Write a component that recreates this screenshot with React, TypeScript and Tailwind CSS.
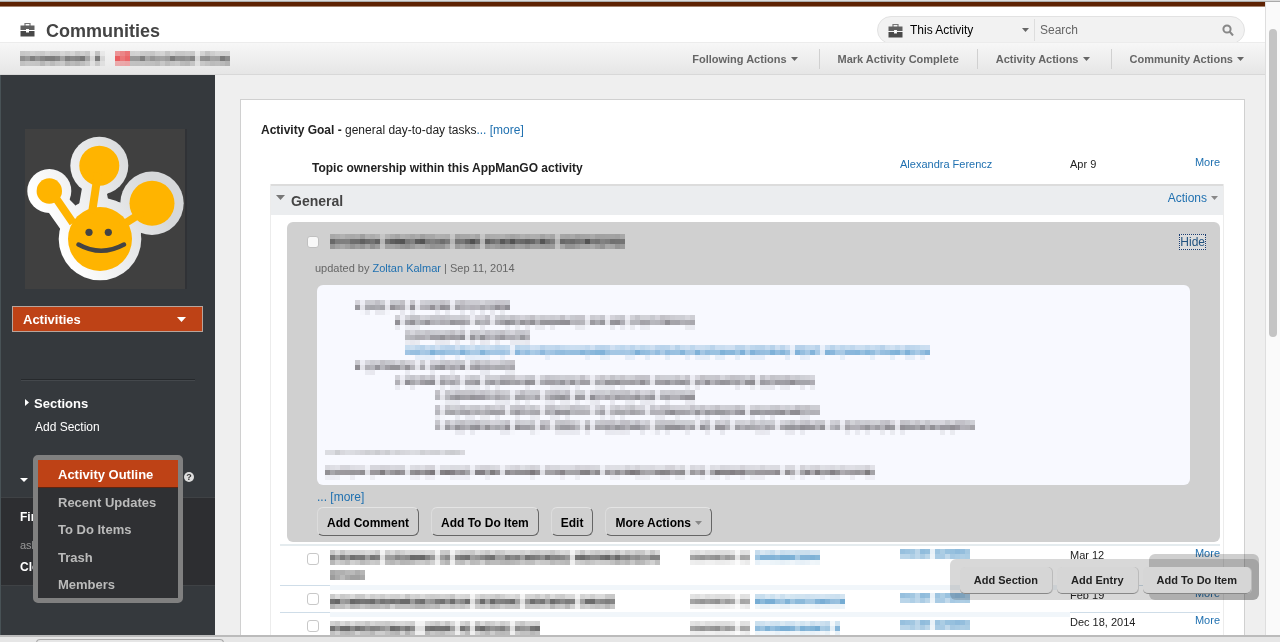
import clsx from 'clsx'

const CELL = 5

interface MosaicProps {
  pattern: string
  rows: number[]
  className?: string
}

function noiseAt(col: number, row: number, seed: number) {
  const n = Math.sin(col * 12.9898 + row * 78.233 + seed * 3.17) * 43758.5453
  return n - Math.floor(n)
}

// every non blank character is one column of the mosaic
function Mosaic({ pattern, rows, className }: MosaicProps) {
  const cells = []
  for (let r = 0; r < rows.length; r++) {
    for (let c = 0; c < pattern.length; c++) {
      const noise = noiseAt(c, r, pattern.length)
      const level = pattern[c] === ' ' ? 0.2 : 0.6 + noise * 0.4
      if (rows[r] < 0.15 && noise < 0.6) continue
      cells.push(
        <rect key={`${r}-${c}`} x={c * CELL} y={r * CELL} width={CELL} height={CELL} opacity={rows[r] * level} />
      )
    }
  }

  return (
    <svg
      width={pattern.length * CELL}
      height={rows.length * CELL}
      fill="currentColor"
      shapeRendering="crispEdges"
      className={clsx('block shrink-0', className)}
      aria-hidden="true"
    >
      {cells}
    </svg>
  )
}

const bodyRows = [0.42, 0.8, 0.12]
const titleRows = [0.38, 1, 0.5]

function Caret({ className }: { className?: string }) {
  return (
    <svg width="7" height="4" viewBox="0 0 7 4" fill="currentColor" className={clsx('shrink-0', className)}>
      <path d="M0 0h7L3.5 4z" />
    </svg>
  )
}

function Briefcase({ className }: { className?: string }) {
  return (
    <svg width="15" height="15" viewBox="0 0 15 15" className={clsx('shrink-0', className)}>
      <path d="M5 4V1.5h5V4" fill="none" stroke="#777" strokeWidth="1.2" />
      <path d="M0.5 3.5h14V8H9V7H6v1H0.5z" fill="#606060" />
      <path d="M0.5 9H6v1.500h3V9h5.500v5.500h-14z" fill="#484848" />
      <path d="M7 7.5h1V10H7z" fill="#fff" />
    </svg>
  )
}

function Logo() {
  const stems = (
    <>
      <path d="M26 62L48 94" />
      <path d="M73 44L67 84" />
      <path d="M118 83L96 97" />
    </>
  )
  return (
    <svg viewBox="0 0 160 160" className="w-40 h-40 bg-[#404040] shadow-[2px_0_0_#303236]">
      <defs>
        <linearGradient id="halo" gradientUnits="userSpaceOnUse" x1="30" y1="110" x2="130" y2="60">
          <stop offset="0" stopColor="#fff" />
          <stop offset="1" stopColor="#d6d8da" />
        </linearGradient>
      </defs>
      <g fill="url(#halo)">
        <circle cx="74.3" cy="36.7" r="29" />
        <circle cx="24.3" cy="62" r="22" />
        <circle cx="127" cy="74.3" r="31.7" />
        <circle cx="75" cy="110" r="41.3" />
        <path d="M24 84L36 101L60 90L50 76L44 70L40 56L20 60z" />
        <path d="M57 59L54 76L62 90L96 84L83 70L82 65L90 56z" />
        <path d="M82 70L97 74L106 80L116 104L112 120L80 96z" />
      </g>
      <g fill="#ffb400">
        <circle cx="74.3" cy="36.7" r="20" />
        <circle cx="24.3" cy="62" r="12.7" />
        <circle cx="127" cy="74.3" r="22.5" />
        <circle cx="75" cy="110" r="32" />
        <g stroke="#ffb400" strokeWidth="8">
          {stems}
        </g>
      </g>
      <circle cx="64" cy="103.3" r="3.6" fill="#444" />
      <circle cx="83.3" cy="103.3" r="3.6" fill="#444" />
      <path d="M53.5 115.5Q76 128 99 115.5" fill="none" stroke="#444" strokeWidth="4.4" strokeLinecap="round" />
    </svg>
  )
}

function Header() {
  return (
    <header className="flex items-start justify-between h-9 px-5 bg-white border-b border-[#ececec] overflow-hidden">
      <div className="flex items-center gap-[11px] h-9 pt-3">
        <Briefcase className="mb-1" />
        <h1 className="text-lg font-bold text-[#444]">Communities</h1>
      </div>
      <div className="flex items-center h-7 w-[368px] mt-[9px] px-[10px] bg-[#f2f2f2] border border-[#e2e2e2] rounded-full text-xs">
        <Briefcase />
        <button className="flex items-center justify-between w-[119px] ml-[7px] text-black">
          This Activity
          <Caret className="text-[#666]" />
        </button>
        <input
          aria-label="Search"
          placeholder="Search"
          className="flex-1 w-0 h-[22px] ml-[5px] pl-[5px] border-l border-[#ddd] outline-none placeholder:text-[#666]"
        />
        <button aria-label="Search" className="ml-1">
          <svg width="12" height="12" viewBox="0 0 12 12" fill="none" stroke="#888" strokeWidth="2">
            <circle cx="5" cy="5" r="3.6" />
            <path d="M7.5 7.5L11 11.5" />
          </svg>
        </button>
      </div>
    </header>
  )
}

const pageActions = [
  { name: 'Following Actions', menu: true },
  { name: 'Mark Activity Complete', menu: false },
  { name: 'Activity Actions', menu: true },
  { name: 'Community Actions', menu: true },
]

function ActionBar() {
  return (
    <div className="flex items-center justify-between h-8 pl-5 bg-gradient-to-b from-[#f7f7f7] to-[#e6e6e6] border-b border-[#d8d8d8]">
      <div className="flex gap-[10px]">
        <Mosaic pattern="xxxxxxxxxxxxxx x " rows={titleRows} className="text-[#777]" />
        <div className="flex">
          <Mosaic pattern="xxx" rows={[0.7, 1, 0.5]} className="text-[#e83a3e]" />
          <Mosaic pattern="xxxxxxxxxxxxx xxxxxx" rows={titleRows} className="text-[#777]" />
        </div>
      </div>
      <div className="flex items-center">
        {pageActions.map((action, i) => (
          <button
            key={action.name}
            className={clsx(
              'flex items-center gap-1 h-5 pt-px px-[18px] text-[11px] font-bold text-[#666]',
              i > 0 && 'border-l border-[#d0d0d0]',
              action.menu && 'pr-[21px]'
            )}
          >
            {action.name}
            {action.menu && <Caret />}
          </button>
        ))}
      </div>
    </div>
  )
}

const outline = ['Activity Outline', 'Recent Updates', 'To Do Items', 'Trash', 'Members']

function Sidebar() {
  return (
    <aside className="relative shrink-0 w-[215px] bg-[#35393d] border-l border-[#485256] text-white">
      <div className="pt-[54px] pl-6">
        <Logo />
      </div>
      <button className="flex items-center justify-between w-[191px] h-[26px] mt-[17px] ml-[11px] pt-px pl-[10px] pr-4 text-[13px] font-bold bg-[#be4216] border border-[#b8a59c]">
        Activities
        <svg width="9" height="5" viewBox="0 0 9 5" fill="currentColor">
          <path d="M0 0h9L4.5 5z" />
        </svg>
      </button>
      <div className="mt-[47px] ml-5 mr-5 border-t border-[#26292c] shadow-[0_1px_0_#44484c]" />
      <div className="flex items-center h-5 mt-[14px] pl-6 gap-[5px]">
        <svg width="4" height="7" viewBox="0 0 4 7" fill="currentColor" className="mb-1">
          <path d="M0 0l4 3.5L0 7z" />
        </svg>
        <h2 className="text-[13px] font-bold">Sections</h2>
      </div>
      <a href="#add-section" className="block mt-[3px] pl-[34px] text-xs leading-5">
        Add Section
      </a>
      <div className="flex items-center justify-between h-10 mt-5 pl-[19px] pr-[21px]">
        <svg width="8" height="4" viewBox="0 0 8 4" fill="currentColor" className="mt-[6px]">
          <path d="M0 0h8L4 4z" />
        </svg>
        <button className="w-[10px] h-[10px] rounded-full bg-[#ddd] text-[9px] leading-[10px] font-bold text-[#333]">?</button>
      </div>
      <div className="h-[89px] pt-[9px] pl-[19px] bg-[#2d2e31] border-y border-[#3f4245] text-xs font-bold">
        <div className="leading-5">Fir</div>
        <div className="mt-2 text-[11px] leading-5 font-normal text-[#999]">ask</div>
        <div className="leading-5 mt-[2px]">Clo</div>
      </div>
      <nav className="absolute top-[380px] left-8 grid auto-rows-fr w-[150px] h-[148px] bg-[#2f3033] border-[5px] border-[#808080] rounded-[5px]">
        {outline.map((item, i) => (
          <a
            key={item}
            href="#outline"
            className={clsx(
              'flex items-center pt-[2px] pl-5 text-[13px] font-bold',
              i === 0 ? 'bg-[#be4216] border-b border-[#5e2410] text-white' : 'text-[#bbb]'
            )}
          >
            {item}
          </a>
        ))}
      </nav>
    </aside>
  )
}

const lines = [
  { indent: 'ml-[30px]', pattern: 'x xxxx xxx x xxxxxx xxxxxxxxxxx' },
  { indent: 'ml-[70px]', pattern: 'x xxxxxxxxxxxxx xxx xxxxxxxxxxxxxxxxxx xxx xxx xxxxxxxxxxxxx' },
  { indent: 'ml-[80px]', pattern: 'xxxxxxxxxxxx xxxxxxxxxxxx' },
  {
    indent: 'ml-[80px]',
    pattern: 'xxxxxxxxxxxxxxxxxxxxx xxxxxxxxxxxxxxxxxxxxxxxxxxxxxxxxxxxxxxxxxxxxxxxxxxxxxxx xxxxx xxxxxxxxxxxxxxxxxxxxx',
    link: true,
  },
  { indent: 'ml-[30px]', pattern: 'x xxxxxxxxxx x xxxxxxx xxxxxxxxx' },
  {
    indent: 'ml-[70px]',
    pattern: 'x xxxxxx xxxx xxx xxxxxxxxxx xxxxxxxxxx xxxxxxxxxxx xxxxxxx xxxxxxxxxxxx xxxxxxxxxxx',
  },
  { indent: 'ml-[110px]', pattern: 'x xxxxxxxxxxxxx xxxxx xxxxx xx xxxxxxxxxxxxx xxxxxxx' },
  { indent: 'ml-[110px]', pattern: 'x xxxxxxxxxxxx xxxxxx xxxxxxxxx xx xxxxxxx xxxxxxxxxxxxxxxxxxx xxxxxxxxxxxxxx' },
  {
    indent: 'ml-[110px]',
    pattern: 'x xxxxxxxxxxxxx xxxx xx xxxxx x xxxxxxxxxxx xxxxxxxx xx xxx xxxxxxxx xxxxxxxxx xx xxxxxxxxxx xxxxxxxxxxxxxxx',
  },
]

const cardButtons = ['Add Comment', 'Add To Do Item', 'Edit', 'More Actions']

function EntryCard() {
  return (
    <article className="mt-[7px] ml-4 mr-[3px] pb-[6px] bg-[#d0d0d0] rounded-md">
      <div className="flex items-center h-[35px] pt-1 pl-5 pr-[14px]">
        <input
          type="checkbox"
          aria-label="Entry"
          className="w-3 h-3 mr-[11px] appearance-none bg-[#f8f8f8] border border-[#c0c0c0] rounded-[3px]"
        />
        <Mosaic
          pattern="xxxxxxxxxx xxxxxxxxxxxxx xxxxx xxxxxxxxxxxxxx xxxxxxxxxxxxx"
          rows={titleRows}
          className="text-[#505050]"
        />
        <a href="#hide" className="ml-auto text-xs leading-[14px] text-[#21527f] bg-[#dcdcdc] border border-dotted border-[#1a3d70]">
          Hide
        </a>
      </div>
      <p className="pl-7 text-[11px] leading-[22px] text-[#666]">
        updated by{' '}
        <a href="#zoltan" className="text-[#1f70b0]">
          Zoltan Kalmar
        </a>{' '}
        | Sep 11, 2014
      </p>
      <div className="mt-[6px] mx-[30px] px-2 pt-[15px] pb-[5px] bg-[#f8f9ff] rounded-md overflow-hidden">
        {lines.map((line, i) => (
          <Mosaic
            key={i}
            pattern={line.pattern}
            rows={bodyRows}
            className={clsx(line.indent, line.link ? 'text-[#5c9ccd]' : 'text-[#747278]')}
          />
        ))}
        <Mosaic pattern="xxxxxxxxxxxxxxxxxxxxxxxxxxxx" rows={[0.35]} className="mt-[15px] text-[#777]" />
        <Mosaic
          pattern="xxxxxxxx xxxxxxx xxxxx xxxxxx xxxxx xxxxxxx xxxxxxxxxxx xxxxxxxxxxxxxxxx xxx xxxxxxxxxxxxxx xx xxxxxxxxxxxxxxx"
          rows={[0.28, 0.9, 0.08]}
          className="mt-[10px] text-[#6e6a6e]"
        />
      </div>
      <a href="#more" className="block w-fit ml-[30px] pt-[3px] text-xs leading-[18px] text-[#1f70b0]">
        ... [more]
      </a>
      <div className="flex gap-3 mt-px ml-[30px]">
        {cardButtons.map(name => (
          <button
            key={name}
            className="flex items-center gap-1 h-[29px] pt-[2px] px-[9px] text-xs font-bold text-black border border-t-[#e4e4e4] border-l-[#dcdcdc] border-r-[#666] border-b-[#666] rounded-md"
          >
            {name}
            {name === 'More Actions' && <Caret className="text-[#888]" />}
          </button>
        ))}
      </div>
    </article>
  )
}

const entries = [
  {
    title: 'xxxxxxxxxx xxxxxxxxxx xx xxxxxxxxxxxxxxxxxxxxxxx xxxxxxxxxxxxxxxxx',
    second: 'xxxxxxx',
    assignee: 'xxxxxxxxxxxxx',
    date: 'Mar 12',
    height: 'h-[41px]',
  },
  {
    title: 'xxxxxxxxxxxxxxxxxxxxxxxxxxxx xxxxxxxxx xxxxxxxxxx xxxxxxx',
    assignee: 'xxxxxxxxxxxxxxxxxx',
    date: 'Feb 19',
    height: 'h-[27px]',
  },
  {
    title: 'xxxxxxxxxxxxxxxxx  xxxxxx xx xxxxxxx xxxxx',
    assignee: 'xxxxxxxxxxxxxxx x',
    date: 'Dec 18, 2014',
    height: 'h-[27px]',
  },
]

function EntryTable() {
  return (
    <table className="w-[calc(100%-12px)] mt-[2px] ml-[9px] table-fixed border-separate border-spacing-0 text-left text-[11px]">
      <colgroup>
        <col className="w-[50px]" />
        <col />
        <col className="w-[210px]" />
        <col className="w-[170px]" />
        <col className="w-[120px]" />
        <col className="w-[30px]" />
      </colgroup>
      <tbody>
        {entries.map((entry, i) => {
          const line = i === 0 ? 'border-t-2 border-[#e4ebee]' : 'border-t border-[#cfdde8]'
          const band = i === 0 ? 'border-t-2 border-[#e4ebee]' : 'border-t-[5px] border-[#f1f6fa]'
          return (
            <tr key={entry.date} className={clsx('align-top', entry.height)}>
              <td className={clsx('pl-[27px] pt-[7px]', line)}>
                <input
                  type="checkbox"
                  aria-label={entry.date}
                  className="block w-3 h-3 appearance-none bg-white border border-[#c8c8c8] rounded-[3px]"
                />
              </td>
              <td className={clsx('pt-1', band)}>
                <Mosaic pattern={entry.title} rows={titleRows} className="text-[#666]" />
                {entry.second && <Mosaic pattern={entry.second} rows={[0.7, 0.8]} className="mt-[5px] text-[#777]" />}
              </td>
              <td className={band}>
                <div className="flex gap-[5px] pt-1">
                  <Mosaic pattern="xxxxxxxxx xx" rows={[0.25, 0.9, 0.15]} className="text-[#777]" />
                  <Mosaic pattern={entry.assignee} rows={[0.35, 0.85, 0.15]} className="text-[#5b9ccb]" />
                </div>
              </td>
              <td className={band}>
                <Mosaic pattern="xxxxxx xxxxxxx" rows={[0.7, 0.55]} className="mt-[3px] text-[#5b9ccb]" />
              </td>
              <td className={clsx('pt-px leading-4 text-[#222]', line)}>{entry.date}</td>
              <td className={clsx('text-right leading-[14px]', line)}>
                <a href="#more" className="text-[#1f70b0]">
                  More
                </a>
              </td>
            </tr>
          )
        })}
      </tbody>
    </table>
  )
}

function FloatingActions() {
  return (
    <div className="absolute right-[6px] bottom-[35px] flex gap-[5px] pt-2 pr-2 pb-[6px] pl-[10px]">
      <div className="absolute inset-0 bg-[#d8d8d8] rounded-md mix-blend-multiply" />
      <div className="absolute right-0 bottom-0 w-[110px] h-[46px] bg-[#cfcfcf] rounded-md mix-blend-multiply" />
      {['Add Section', 'Add Entry', 'Add To Do Item'].map(name => (
        <button
          key={name}
          className="relative h-[27px] px-[14px] text-[11px] font-bold text-[#222] bg-[#d6d6d6] border-b border-[#888] rounded-[5px] shadow-[1px_0_0_#bbb]"
        >
          {name}
        </button>
      ))}
    </div>
  )
}

export default function App() {
  return (
    <div className="flex flex-col h-screen overflow-hidden bg-[#efefef] font-['Liberation_Sans',Arial,sans-serif]">
      <div className="shrink-0 h-[2px] bg-[#dcdcdc] border-b border-[#aaa]" />
      <div className="flex flex-1 min-h-0">
        <div className="flex flex-col flex-1 min-w-0">
          <div className="shrink-0 h-[5px] bg-[#5e2203] border-b border-[#a58472]" />
          <Header />
          <ActionBar />
          <div className="relative flex flex-1 min-h-0 overflow-hidden">
            <Sidebar />
            <main className="flex-1 min-w-0 pt-6 pl-[25px] pr-5">
              <div className="h-full pl-[29px] pr-5 bg-white border border-b-0 border-[#d0d0d0] overflow-hidden">
                <p className="-ml-[9px] pt-5 text-xs leading-5 text-[#222]">
                  <b>Activity Goal -</b> general day-to-day tasks
                  <a href="#goal" className="text-[#1f70b0]">
                    ... [more]
                  </a>
                </p>
                <div className="flex items-center h-[44px] pl-[42px] pr-1 text-[11px] text-[#222]">
                  <h2 className="flex-1 pt-3 text-xs font-bold">Topic ownership within this AppManGO activity</h2>
                  <a href="#alexandra" className="w-[170px] pt-1 text-[#1f70b0]">
                    Alexandra Ferencz
                  </a>
                  <span className="w-[120px] pt-1">Apr 9</span>
                  <a href="#more" className="w-[30px] text-right text-[#1f70b0]">
                    More
                  </a>
                </div>
                <section className="border-x border-[#ececec]">
                  <div className="flex items-center h-[31px] px-[5px] bg-[#ebedef] border-t-2 border-[#dcdcdc]">
                    <svg width="9" height="5" viewBox="0 0 9 5" fill="#777" className="mb-[6px]">
                      <path d="M0 0h9L4.5 5z" />
                    </svg>
                    <h3 className="ml-[6px] text-sm font-bold text-[#444]">General</h3>
                    <button className="flex items-center gap-1 mb-[5px] ml-auto text-xs text-[#1f70b0]">
                      Actions
                      <Caret className="text-[#888]" />
                    </button>
                  </div>
                  <EntryCard />
                  <EntryTable />
                </section>
              </div>
            </main>
            <FloatingActions />
          </div>
        </div>
        <div className="shrink-0 w-[15px] pt-[27px] pl-[3px] bg-[#fafafa] border-l border-[#dedede]">
          <div className="w-2 h-[308px] bg-[#c4c4c4] rounded-full" />
        </div>
      </div>
      <div className="shrink-0 h-[7px] bg-[#e6e6e6] border-t-2 border-[#bbb]">
        <div className="w-[188px] h-[5px] mt-[2px] ml-9 border border-b-0 border-[#aaa] rounded-t" />
      </div>
    </div>
  )
}
